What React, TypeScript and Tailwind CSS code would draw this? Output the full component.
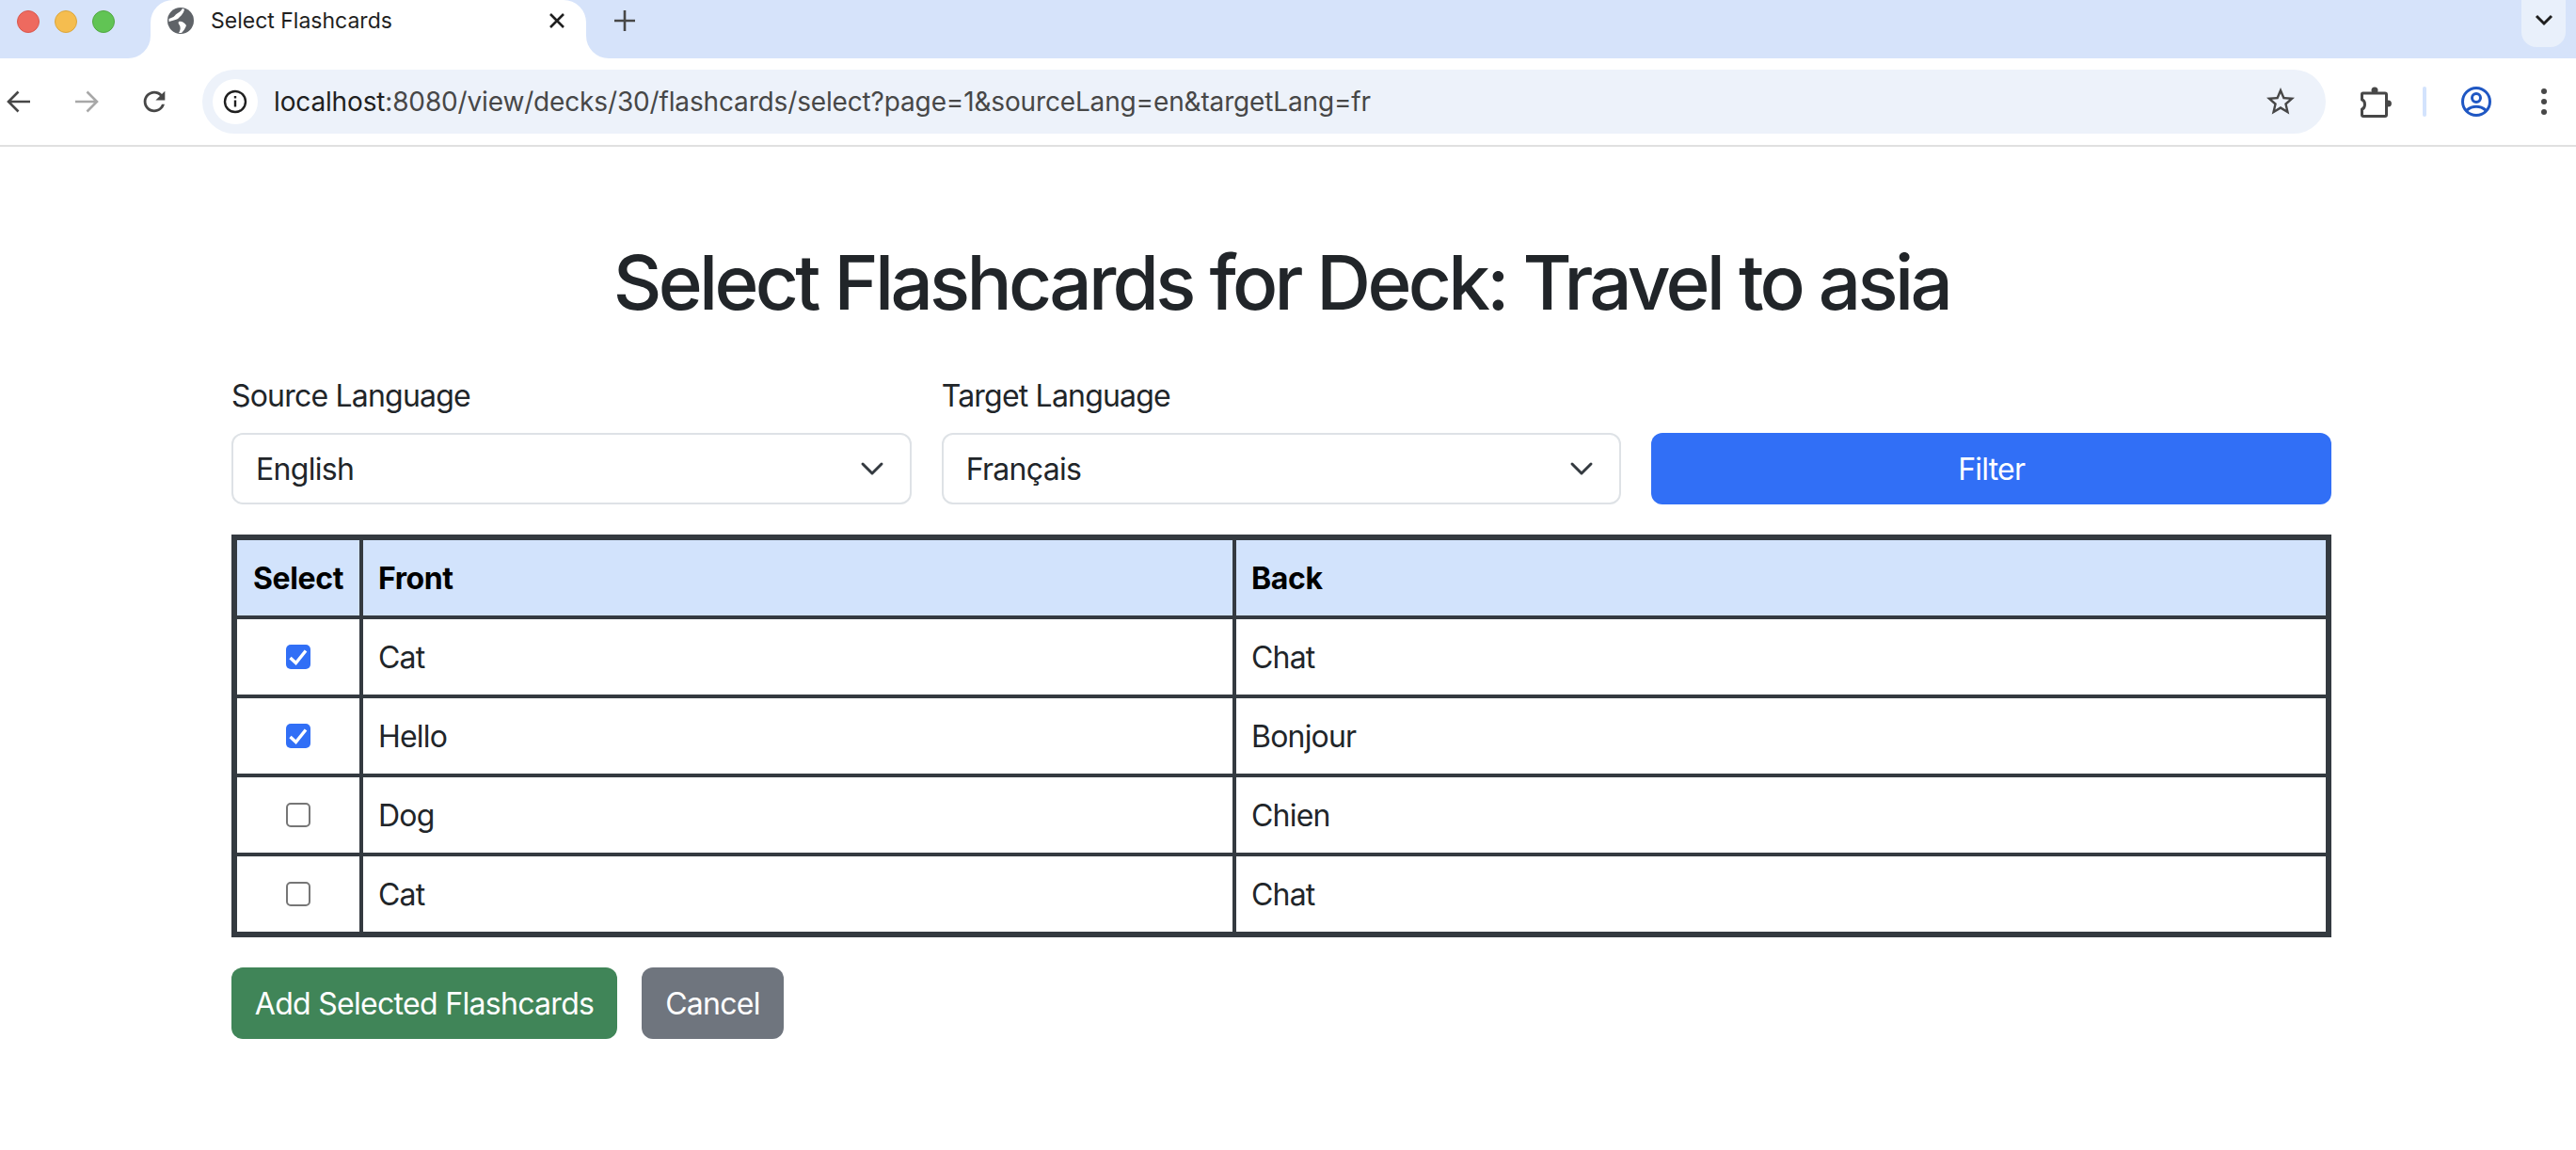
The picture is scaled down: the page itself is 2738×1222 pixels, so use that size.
import React from "react";

const rows = [
  { front: "Cat", back: "Chat", on: true },
  { front: "Hello", back: "Bonjour", on: true },
  { front: "Dog", back: "Chien", on: false },
  { front: "Cat", back: "Chat", on: false },
];

function Chevron() {
  return (
    <svg width="32" height="32" viewBox="0 0 16 16" fill="none" stroke="#343a40" strokeWidth="1.5" strokeLinecap="round" strokeLinejoin="round">
      <path d="m3 5.5 5 5 5-5" />
    </svg>
  );
}

function Select({ label, value }: { label: string; value: string }) {
  return (
    <div>
      <div className="mb-[15px] pt-[1px] text-[32px] leading-[48px] tracking-[-0.8px]">{label}</div>
      <div className="flex h-[76px] items-center justify-between rounded-[12px] border-2 border-[#dee2e6] bg-white pl-6 pr-6 text-[32px] tracking-[-0.7px]">
        <span className="pt-[2px]">{value}</span>
        <Chevron />
      </div>
    </div>
  );
}

function Check({ on }: { on: boolean }) {
  return on ? (
    <div className="mx-auto h-[26px] w-[26px] rounded-[5px] bg-[#316ff6]">
      <svg className="block" width="26" height="26" viewBox="0 0 26 26" fill="none" stroke="#fff" strokeWidth="3.4">
        <path d="M4.5 14l6 5.5L21 6.5" />
      </svg>
    </div>
  ) : (
    <div className="mx-auto h-[26px] w-[26px] rounded-[5px] border-2 border-[#767676] bg-white" />
  );
}

export default function App() {
  return (
    <div className="min-h-[1222px] bg-white font-['Inter',sans-serif] text-[#212529]">
      <div className="flex h-[62px] bg-[linear-gradient(#d6e3fa_50%,#ffffff_50%)]">
        <div className="flex w-[160px] items-center gap-4 rounded-br-[24px] bg-[#d6e3fa] pb-[16px] pl-[18px]">
          <span className="h-6 w-6 rounded-full border border-[#d9584d] bg-[#ee6a5f]" />
          <span className="h-6 w-6 rounded-full border border-[#dba63c] bg-[#f5bd4f]" />
          <span className="h-6 w-6 rounded-full border border-[#52a842] bg-[#61c454]" />
        </div>
        <div className="flex w-[463px] items-center rounded-t-[24px] bg-white pb-[18px] pl-[18px] pr-[20px]">
          <svg width="28" height="28" viewBox="0 0 28 28">
            <circle cx="14" cy="14" r="14" fill="#5f6368" />
            <path fill="#fff" d="M16 1C14 5 10 6 8 8.5 6 11 3 11 1.5 12L1.5 15C5 14 9 13 11 12 13 10 17 7 18 2Z" />
            <path fill="#fff" d="M12 15C15 14 18 16 20 19 19 22 17 25 15 27L12 27C14 24 14 21 13 19 12 18 11 16 12 15Z" />
          </svg>
          <span className="ml-[18px] text-[23px] text-[#1f1f1f]">Select Flashcards</span>
          <svg className="ml-auto" width="22" height="22" viewBox="0 0 22 22" fill="none" stroke="#1f1f1f" strokeWidth="2.6">
            <path d="m4 4 14 14M18 4 4 18" />
          </svg>
        </div>
        <div className="flex flex-1 rounded-bl-[24px] bg-[#d6e3fa]">
          <svg className="ml-[28px] mt-[9px]" width="26" height="26" viewBox="0 0 26 26" fill="none" stroke="#474747" strokeWidth="2.6">
            <path d="M13 2v22M2 13h22" />
          </svg>
          <div className="ml-auto mr-[11px] flex h-[50px] w-[47px] items-center justify-center rounded-b-[16px] bg-[#e9f0fb] pb-[6px]">
            <svg width="22" height="16" viewBox="0 0 22 16" fill="none" stroke="#1f1f1f" strokeWidth="3">
              <path d="m3 3 8 8 8-8" />
            </svg>
          </div>
        </div>
      </div>

      <div className="flex h-[94px] items-center border-b-2 border-[#e0e0e0]">
        <svg className="ml-[4px]" width="32" height="32" viewBox="0 0 32 32" fill="none" stroke="#474747" strokeWidth="2.6">
          <path d="M28 16H5M15.5 5.5 5 16l10.5 10.5" />
        </svg>
        <svg className="ml-[40px]" width="32" height="32" viewBox="0 0 32 32" fill="none" stroke="#a8a8a8" strokeWidth="2.6">
          <path d="M4 16h23M16.5 5.5 27 16 16.5 26.5" />
        </svg>
        <svg className="ml-[39px]" width="34" height="34" viewBox="0 0 24 24" fill="#474747">
          <path d="M17.65 6.35A7.958 7.958 0 0 0 12 4c-4.42 0-7.99 3.58-7.99 8s3.57 8 7.99 8c3.73 0 6.84-2.55 7.73-6h-2.08A5.99 5.99 0 0 1 12 18c-3.31 0-6-2.69-6-6s2.69-6 6-6c1.66 0 3.14.69 4.22 1.78L13 11h7V4l-2.35 2.35z" />
        </svg>
        <div className="ml-[34px] flex h-[68px] flex-1 items-center rounded-full bg-[#edf2fa] pl-[11px] pr-[30px]">
          <div className="flex h-12 w-12 items-center justify-center rounded-full bg-white">
            <svg width="28" height="28" viewBox="0 0 28 28" fill="none" stroke="#1f1f1f" strokeWidth="2.4">
              <circle cx="14" cy="14" r="11" />
              <path d="M14 12.5v7M14 8v2.6" />
            </svg>
          </div>
          <div className="ml-[17px] text-[28px] tracking-[-0.15px] text-[#474747]">
            <span className="text-[#1f1f1f]">localhost</span>:8080/view/decks/30/flashcards/select?page=1&amp;sourceLang=en&amp;targetLang=fr
          </div>
          <svg className="ml-auto" width="36" height="36" viewBox="0 0 24 24" fill="#474747">
            <path d="M22 9.24l-7.19-.62L12 2 9.19 8.63 2 9.24l5.46 4.73L5.82 21 12 17.27 18.18 21l-1.63-7.03L22 9.24zM12 15.4l-3.76 2.27 1-4.28-3.32-2.88 4.38-.38L12 6.1l1.71 4.04 4.38.38-3.32 2.88 1 4.28L12 15.4z" />
          </svg>
        </div>
        <div className="flex w-[266px] items-center">
          <svg className="ml-[36px]" width="34" height="34" viewBox="0 0 34 34" fill="none" stroke="#474747" strokeWidth="3" strokeLinejoin="round">
            <path d="M3.5 8H27a1.5 1.5 0 0 1 1.5 1.5V31a1.5 1.5 0 0 1-1.5 1.5H4a1.5 1.5 0 0 1-1.5-1.5v-6c4-1 4-9 0-10V9a1 1 0 0 1 1-1Z" />
            <circle cx="16" cy="5" r="3.5" fill="#474747" stroke="none" />
            <circle cx="30.5" cy="19" r="3.5" fill="#474747" stroke="none" />
          </svg>
          <span className="ml-[33px] h-8 w-1 rounded-sm bg-[#d3e3fd]" />
          <svg className="ml-[36px]" width="34" height="34" viewBox="0 0 34 34" fill="none" stroke="#1f57c3" strokeWidth="3">
            <circle cx="17" cy="17" r="14.5" />
            <circle cx="17" cy="13" r="4.5" />
            <path d="M7 26c6-5 14-5 20 0" />
          </svg>
          <svg className="ml-[51px]" width="8" height="32" viewBox="0 0 8 32" fill="#474747">
            <circle cx="4" cy="5" r="3" />
            <circle cx="4" cy="16" r="3" />
            <circle cx="4" cy="27" r="3" />
          </svg>
        </div>
      </div>

      <main className="ml-[246px] w-[2232px] pt-24">
        <h1 className="mb-12 text-center text-[80px] font-medium leading-[96px] tracking-[-3.7px]">Select Flashcards for Deck: Travel to asia</h1>
        <div className="grid grid-cols-3 gap-x-8">
          <Select label="Source Language" value="English" />
          <Select label="Target Language" value="Français" />
          <div className="flex items-end">
            <button className="h-[76px] w-full rounded-[12px] bg-[#316ff6] pt-[2px] text-[32px] tracking-[-0.8px] text-white">Filter</button>
          </div>
        </div>

        <table className="mt-8 w-full table-fixed border-separate border-spacing-0 border-[6px] border-[#343a40] text-[32px] tracking-[-0.8px]">
          <colgroup>
            <col className="w-[134px]" />
            <col className="w-[928px]" />
            <col />
          </colgroup>
          <thead>
            <tr className="bg-[#d2e3fc] text-black">
              <th className="h-[84px] border-b-4 border-r-4 border-[#343a40] pt-[2px] text-center font-bold tracking-[-0.4px]">Select</th>
              <th className="h-[84px] border-b-4 border-r-4 border-[#343a40] px-4 pt-[2px] text-left font-bold tracking-[-0.4px]">Front</th>
              <th className="h-[84px] border-b-4 border-[#343a40] px-4 pt-[2px] text-left font-bold tracking-[-0.4px]">Back</th>
            </tr>
          </thead>
          <tbody>
            {rows.map((r, i) => {
              const last = i === rows.length - 1;
              return (
                <tr key={i}>
                  <td className={last ? "h-[80px] border-r-4 border-[#343a40]" : "h-[84px] border-b-4 border-r-4 border-[#343a40]"}>
                    <Check on={r.on} />
                  </td>
                  <td className={last ? "h-[80px] border-r-4 border-[#343a40] px-4 pt-[2px]" : "h-[84px] border-b-4 border-r-4 border-[#343a40] px-4 pt-[2px]"}>{r.front}</td>
                  <td className={last ? "h-[80px] px-4 pt-[2px]" : "h-[84px] border-b-4 border-[#343a40] px-4 pt-[2px]"}>{r.back}</td>
                </tr>
              );
            })}
          </tbody>
        </table>

        <div className="mt-8 flex gap-[26px]">
          <button className="h-[76px] w-[410px] rounded-[12px] bg-[#408558] pt-[2px] text-[32px] tracking-[-0.7px] text-white">Add Selected Flashcards</button>
          <button className="h-[76px] w-[151px] rounded-[12px] bg-[#6f757e] pt-[2px] text-[32px] tracking-[-0.7px] text-white">Cancel</button>
        </div>
      </main>
    </div>
  );
}
